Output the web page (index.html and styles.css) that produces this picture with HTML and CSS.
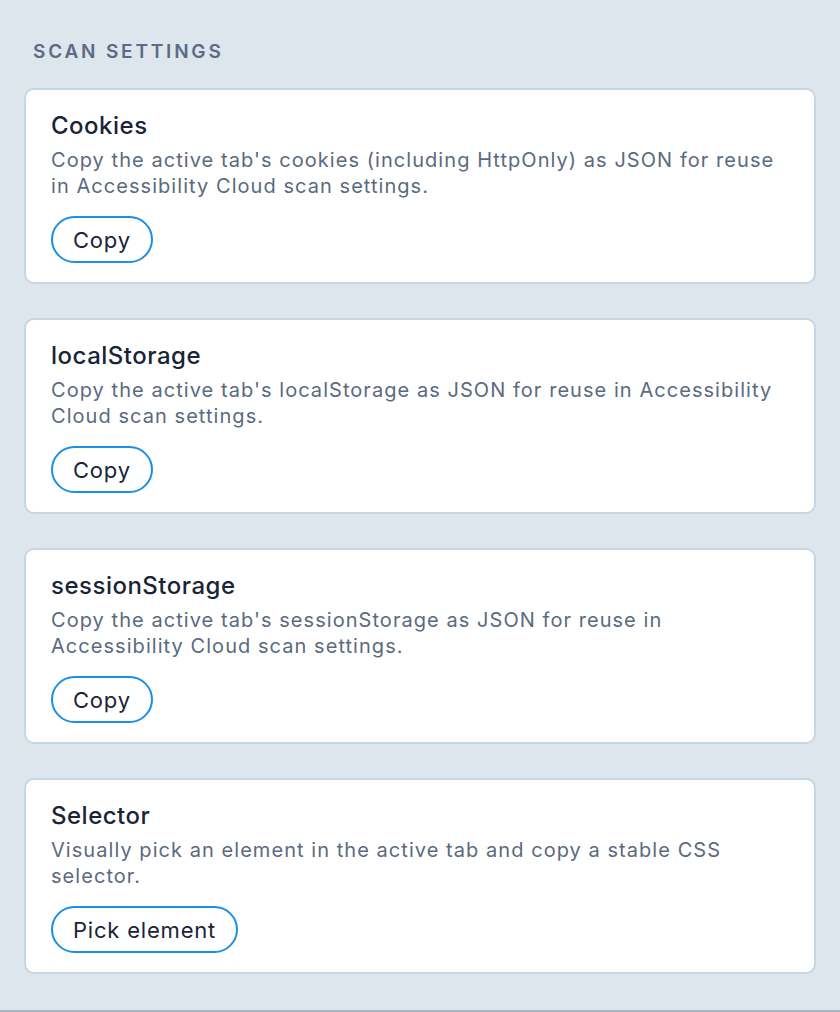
FILE: index.html
```html
<!DOCTYPE html>
<html>
<head>
<meta charset="utf-8">
<link rel="stylesheet" href="styles.css">
</head>
<body>
<main class="panel">
  <h2 class="section-title">Scan settings</h2>
  <div class="cards">
    <section class="card">
      <h3 class="card-title">Cookies</h3>
      <p class="card-desc">Copy the active tab's cookies (including HttpOnly) as JSON for reuse in Accessibility Cloud scan settings.</p>
      <button class="btn">Copy</button>
    </section>
    <section class="card">
      <h3 class="card-title">localStorage</h3>
      <p class="card-desc">Copy the active tab's localStorage as JSON for reuse in Accessibility Cloud scan settings.</p>
      <button class="btn">Copy</button>
    </section>
    <section class="card">
      <h3 class="card-title">sessionStorage</h3>
      <p class="card-desc">Copy the active tab's sessionStorage as JSON for reuse in Accessibility Cloud scan settings.</p>
      <button class="btn">Copy</button>
    </section>
    <section class="card">
      <h3 class="card-title">Selector</h3>
      <p class="card-desc">Visually pick an element in the active tab and copy a stable CSS selector.</p>
      <button class="btn">Pick element</button>
    </section>
  </div>
</main>
</body>
</html>
```
FILE: styles.css
```css
html, body {
  margin: 0;
  padding: 0;
  background: #dde5ed;
  height: 100%;
}
body {
  font-family: Inter, "Noto Sans", sans-serif;
  box-sizing: border-box;
  border-bottom: 2px solid #a9b4bf;
}
.panel {
  padding: 38px 24px 0 24px;
}
.section-title {
  margin: 0 0 22px 9px;
  font-size: 19px;
  font-weight: 600;
  letter-spacing: 2.8px;
  text-transform: uppercase;
  color: #5b6b84;
  line-height: 28px;
}
.cards {
  display: flex;
  flex-direction: column;
  gap: 34px;
}
.card {
  background: #fff;
  border: 2px solid #c8d6e3;
  border-radius: 10px;
  padding: 20px 25px 19px 25px;
  display: flex;
  flex-direction: column;
  align-items: flex-start;
}
.card-title {
  margin: 0;
  font-size: 24px;
  font-weight: 500;
  letter-spacing: 0.5px;
  line-height: 32px;
  color: #1a2438;
}
.card-desc {
  margin: 5px 0 17px 0;
  font-size: 20px;
  letter-spacing: 1.05px;
  line-height: 26px;
  color: #5a6a80;
}
.btn {
  font-family: inherit;
  font-size: 22px;
  letter-spacing: 0.8px;
  color: #1a2438;
  background: #fff;
  border: 2px solid #1a8fe8;
  border-radius: 999px;
  height: 47px;
  padding: 0 20px;
  cursor: pointer;
}
```
